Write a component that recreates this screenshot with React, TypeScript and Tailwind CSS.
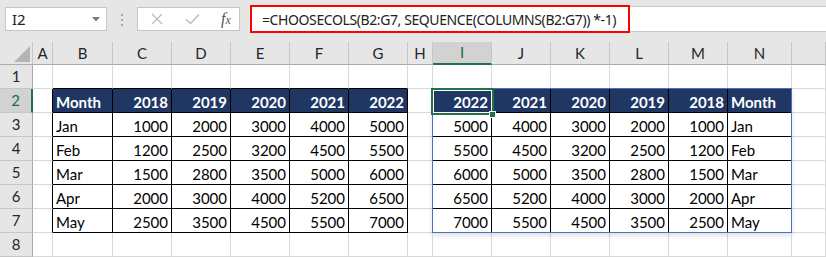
import React from "react";

const cols = ["A", "B", "C", "D", "E", "F", "G", "H", "I", "J", "K", "L", "M", "N", ""];

const leftHead = ["Month", "2018", "2019", "2020", "2021", "2022"];
const rightHead = ["2022", "2021", "2020", "2019", "2018", "Month"];

const rows: [string, number[]][] = [
  ["Jan", [1000, 2000, 3000, 4000, 5000]],
  ["Feb", [1200, 2500, 3200, 4500, 5500]],
  ["Mar", [1500, 2800, 3500, 5000, 6000]],
  ["Apr", [2000, 3000, 4000, 5200, 6500]],
  ["May", [2500, 3500, 4500, 5500, 7000]],
];

type Cell = {
  text?: string;
  head?: boolean;
  right?: boolean;
  r?: string;
  b?: string;
};

// one sheet row: index 0 = A ... 7 = H, 8..13 = I..N, 14 = filler
const buildRow = (rowNum: number): Cell[] => {
  const cells: Cell[] = [];
  for (let c = 0; c < 15; c++) cells.push({});

  const inTable = rowNum >= 2 && rowNum <= 7;
  if (inTable) {
    cells[0].r = "black"; // left edge of B2:G7
    for (let c = 1; c <= 6; c++) {
      cells[c].r = "black";
      cells[c].b = "black";
    }
    for (let c = 8; c <= 13; c++) {
      cells[c].r = "black";
      cells[c].b = "black";
    }
    cells[7].r = "blue";
    cells[13].r = "blue";
    if (rowNum === 7) for (let c = 8; c <= 13; c++) cells[c].b = "blue";
  }
  if (rowNum === 1) {
    for (let c = 1; c <= 6; c++) cells[c].b = "black";
    for (let c = 8; c <= 13; c++) cells[c].b = "blue";
  }

  if (rowNum === 2) {
    leftHead.forEach((t, i) => {
      cells[1 + i] = { ...cells[1 + i], text: t, head: true, right: i > 0 };
    });
    rightHead.forEach((t, i) => {
      cells[8 + i] = { ...cells[8 + i], text: t, head: true, right: i < 5 };
    });
  } else if (inTable) {
    const [m, vals] = rows[rowNum - 3];
    cells[1] = { ...cells[1], text: m };
    vals.forEach((v, i) => {
      cells[2 + i] = { ...cells[2 + i], text: String(v), right: true };
    });
    [...vals].reverse().forEach((v, i) => {
      cells[8 + i] = { ...cells[8 + i], text: String(v), right: true };
    });
    cells[13] = { ...cells[13], text: m };
  }
  return cells;
};

const rColor = (c?: string) =>
  c === "black" ? "border-r-black" : c === "blue" ? "border-r-[#4472c4]" : "border-r-[#d9d9d9]";
const bColor = (c?: string) =>
  c === "black" ? "border-b-black" : c === "blue" ? "border-b-[#4472c4]" : "border-b-[#d9d9d9]";

export default function App() {
  const body = [1, 2, 3, 4, 5, 6, 7, 8].map((n) => buildRow(n));

  return (
    <div
      className="w-[826px] h-[257px] overflow-hidden bg-[#e6e6e6] text-black"
      style={{ fontFamily: "Lato, 'Noto Sans', sans-serif" }}
    >
      {/* formula bar */}
      <div className="h-[42px] flex items-start">
        <div className="ml-[5px] mt-[7px] w-[102px] h-[24px] bg-white border border-[#c6c6c6] flex items-center justify-between pl-[6px] pr-[6px]">
          <span className="text-[15px] text-[#222]" style={{ fontFamily: "'Noto Sans', sans-serif" }}>
            I2
          </span>
          <svg width="8" height="5" viewBox="0 0 8 5">
            <path d="M0 0 L8 0 L4 4.5 Z" fill="#7a7a7a" />
          </svg>
        </div>
        <div className="w-[30px] h-[38px] flex flex-col items-center justify-center gap-[3px] pt-[1px]">
          <span className="w-[2px] h-[2px] bg-[#a6a6a6]" />
          <span className="w-[2px] h-[2px] bg-[#a6a6a6]" />
          <span className="w-[2px] h-[2px] bg-[#a6a6a6]" />
        </div>
        <div className="mt-[7px] w-[103px] h-[24px] bg-white border border-[#c6c6c6] flex items-center">
          <svg className="ml-[13px]" width="12" height="12" viewBox="0 0 12 12">
            <path d="M1 1 L11 11 M11 1 L1 11" stroke="#bdbdbd" strokeWidth="1.4" />
          </svg>
          <svg className="ml-[22px]" width="15" height="12" viewBox="0 0 15 12">
            <path d="M1 6.5 L5.5 10.5 L14 1.5" stroke="#bdbdbd" strokeWidth="1.6" fill="none" />
          </svg>
          <span
            className="ml-[21px] text-[16px] italic text-[#555]"
            style={{ fontFamily: "'Liberation Serif', serif" }}
          >
            f<span className="text-[12px]">x</span>
          </span>
        </div>
        <div className="ml-[10px] mt-[6px] flex-1 h-[26px] bg-white border-y border-l border-[#c6c6c6] flex">
          <div className="-mt-[2px] -ml-px w-[380px] h-[28px] border-2 border-[#ff0000] flex items-center pl-[10px] whitespace-nowrap overflow-hidden">
            <span
              className="text-[14px] text-[#222] tracking-[-0.4px]"
              style={{ fontFamily: "'Noto Sans', sans-serif" }}
            >
              =CHOOSECOLS(B2:G7, SEQUENCE(COLUMNS(B2:G7)) *-1)
            </span>
          </div>
        </div>
      </div>

      {/* sheet */}
      <div className="relative bg-white">
        <div className="grid grid-cols-[33px_20px_60px_59px_59px_59px_59px_59px_25px_59px_59px_59px_59px_59px_64px_1fr] grid-rows-[23px_repeat(8,24px)] text-[15px]">
          {/* corner */}
          <div className="bg-[#e6e6e6] border-r border-b border-r-[#c6c6c6] border-b-[#ababab] flex items-end justify-end pr-[2px] pb-[2px]">
            <svg width="16" height="16" viewBox="0 0 16 16">
              <path d="M16 0 L16 16 L0 16 Z" fill="#b4b4b4" />
            </svg>
          </div>
          {cols.map((c, i) => (
            <div
              key={"h" + i}
              className={`flex items-center justify-center border-r border-r-[#c6c6c6] ${
                c === "I"
                  ? "bg-[#d2d2d2] border-b-2 border-b-[#217346] text-[#1e6b40]"
                  : "bg-[#e6e6e6] border-b border-b-[#ababab] text-[#262626]"
              }`}
            >
              {c}
            </div>
          ))}

          {body.map((cells, ri) => {
            const n = ri + 1;
            return (
              <React.Fragment key={"r" + n}>
                <div
                  className={`flex items-center justify-center border-b border-b-[#c6c6c6] ${
                    n === 2
                      ? "bg-[#d2d2d2] border-r-2 border-r-[#217346] text-[#1e6b40]"
                      : "bg-[#e6e6e6] border-r border-r-[#ababab] text-[#262626]"
                  }`}
                >
                  {n}
                </div>
                {cells.map((cell, ci) => (
                  <div
                    key={ci}
                    className={`flex items-end leading-[20px] px-[3px] border-r border-b whitespace-nowrap overflow-hidden ${rColor(
                      cell.r
                    )} ${bColor(cell.b)} ${cell.right ? "justify-end" : "justify-start"} ${
                      cell.head ? "bg-[#203764] text-white font-bold" : ""
                    }`}
                  >
                    {cell.text}
                  </div>
                ))}
              </React.Fragment>
            );
          })}
        </div>

        {/* spilled range outline */}
        <div className="absolute left-[432px] top-[46px] w-[360px] h-[145px] border border-[#4472c4] shadow-[0_3px_5px_rgba(0,0,0,0.12)] pointer-events-none" />

        {/* active cell I2 */}
        <div className="absolute left-[431px] top-[46px] w-[63px] h-[27px] border-2 border-[#217346] pointer-events-none">
          <div className="w-full h-full border border-white" />
        </div>
        <div className="absolute left-[489px] top-[69px] w-[7px] h-[7px] bg-[#217346] border border-white pointer-events-none" />
      </div>
    </div>
  );
}
